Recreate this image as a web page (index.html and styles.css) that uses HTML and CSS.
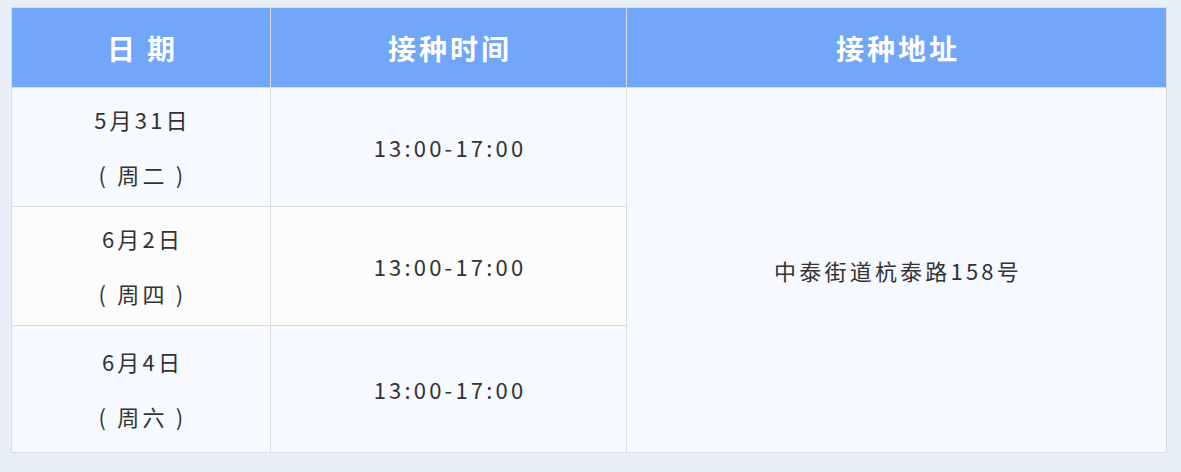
FILE: index.html
```html
<!DOCTYPE html>
<html lang="zh-CN">
<head>
<meta charset="utf-8">
<title>接种安排</title>
<link rel="stylesheet" href="styles.css">
</head>
<body>
<div class="wrap">
<table class="sched">
  <colgroup>
    <col class="c-date">
    <col class="c-time">
    <col class="c-addr">
  </colgroup>
  <thead>
    <tr class="head">
      <th><span class="h-ri">日</span>期</th>
      <th>接种时间</th>
      <th>接种地址</th>
    </tr>
  </thead>
  <tbody>
    <tr class="r1 odd">
      <td class="date"><p class="l1">5月31日</p><p class="l2">( 周二 )</p></td>
      <td class="time">13:00-17:00</td>
      <td class="addr" rowspan="3">中泰街道杭泰路158号</td>
    </tr>
    <tr class="r2 even">
      <td class="date"><p class="l1">6月2日</p><p class="l2">( 周四 )</p></td>
      <td class="time">13:00-17:00</td>
    </tr>
    <tr class="r3 odd">
      <td class="date"><p class="l1">6月4日</p><p class="l2">( 周六 )</p></td>
      <td class="time">13:00-17:00</td>
    </tr>
  </tbody>
</table>
</div>
</body>
</html>
```

FILE: styles.css
```css
html, body {
  margin: 0;
  padding: 0;
  background: #e8eff7;
}
body {
  font-family: "Noto Sans CJK SC", "Noto Sans", sans-serif;
  color: #333;
}
.wrap {
  padding: 7px 15px 19px 11px;
}
.sched {
  width: 1155px;
  border-collapse: collapse;
  table-layout: fixed;
}
.c-date { width: 259px; }
.c-time { width: 356px; }
.c-addr { width: 540px; }
.sched th,
.sched td {
  border: 1px solid #dcdcdc;
  text-align: center;
  vertical-align: middle;
  padding: 0;
}
.head th {
  background: #71a6f9;
  color: #fff;
  font-weight: 700;
  font-size: 28px;
  letter-spacing: 3px;
  text-indent: 3px;
  height: 79px;
  line-height: 30px;
}
.h-ri { margin-right: 9px; }
.odd td { background: #f6f9ff; }
.even td { background: #fcfcfd; }
.sched td.addr { background: #f6f9ff; }
.r1 td, .r2 td { height: 118px; }
.r3 td { height: 126px; }
.sched td {
  font-size: 22px;
  letter-spacing: 3.2px;
  text-indent: 3px;
}
.date { padding-top: 4px; }
.l1, .l2 {
  margin: 0;
  line-height: 55px;
}
.time { padding-top: 4px; }
```
